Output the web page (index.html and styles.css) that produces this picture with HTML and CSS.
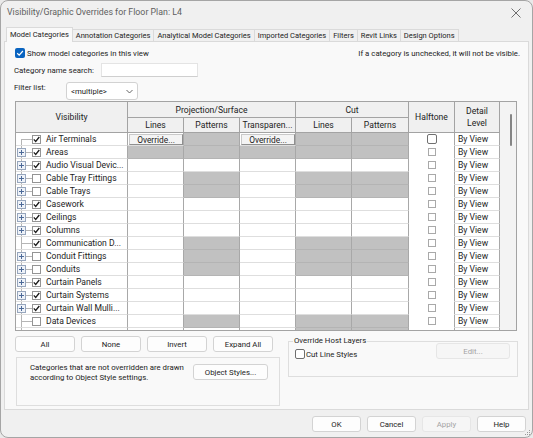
FILE: index.html
```html
<!DOCTYPE html>
<html lang="en">
<head>
  <meta charset="UTF-8" />
  <title>Visibility/Graphic Overrides for Floor Plan: L4</title>
  <link rel="stylesheet" href="styles.css">
</head>
<body>

<div class="window">
  <div class="titlebar">
    <span class="title">Visibility/Graphic Overrides for Floor Plan: L4</span>
    <svg class="close" width="10" height="10" viewBox="0 0 10 10">
      <path d="M0.5 0.5 L9.5 9.5 M9.5 0.5 L0.5 9.5" stroke="#6f6f6f" stroke-width="1" fill="none"/>
    </svg>
  </div>

  <div class="tabs">
    <span class="tab active">Model Categories</span>
    <span class="tab">Annotation Categories</span>
    <span class="tab">Analytical Model Categories</span>
    <span class="tab">Imported Categories</span>
    <span class="tab">Filters</span>
    <span class="tab">Revit Links</span>
    <span class="tab">Design Options</span>
  </div>

  <div class="panel">
    <div class="top-row">
      <label class="show">
        <span class="blue-cb">
          <svg width="10" height="10" viewBox="0 0 10 10"><path d="M2.2 5.2 L4.2 7.1 L7.9 3" stroke="#fff" stroke-width="1.2" fill="none"/></svg>
        </span>
        Show model categories in this view
      </label>
      <span class="hint">If a category is unchecked, it will not be visible.</span>
    </div>

    <div class="field search-row">
      <span class="field-label search-label">Category name search:</span>
      <span class="text-input"></span>
    </div>

    <div class="field filter-row">
      <span class="field-label filter-label">Filter list:</span>
      <span class="select">
        &lt;multiple&gt;
        <svg width="7" height="5" viewBox="0 0 7 5"><path d="M0.5 1 L3.5 4 L6.5 1" stroke="#555" stroke-width="0.9" fill="none"/></svg>
      </span>
    </div>

    <div class="grid">
      <table class="cats">
        <colgroup>
          <col style="width:112px"><col style="width:56px"><col style="width:56px"><col style="width:56px">
          <col style="width:56px"><col style="width:57px"><col style="width:46px"><col style="width:45px">
        </colgroup>
        <thead>
          <tr class="h1">
            <th rowspan="2">Visibility</th>
            <th colspan="3">Projection/Surface</th>
            <th colspan="2">Cut</th>
            <th rowspan="2">Halftone</th>
            <th rowspan="2">Detail<br>Level</th>
          </tr>
          <tr class="h2">
            <th>Lines</th>
            <th>Patterns</th>
            <th>Transparen...</th>
            <th>Lines</th>
            <th>Patterns</th>
          </tr>
        </thead>
        <tbody id="rows"></tbody>
      </table>
      <div class="vscroll"><div class="thumb"></div></div>
    </div>

    <div class="lower">
      <div class="lower-left">
        <div class="btn-row">
          <button class="btn wide">All</button>
          <button class="btn wide">None</button>
          <button class="btn wide">Invert</button>
          <button class="btn wide">Expand All</button>
        </div>
        <div class="note-box">
          <p>Categories that are not overridden are drawn<br>according to Object Style settings.</p>
          <button class="btn styles-btn">Object Styles...</button>
        </div>
      </div>

      <fieldset class="host">
        <legend>Override Host Layers</legend>
        <div class="host-row">
          <label class="cut-lines"><span class="win-cb"></span>Cut Line Styles</label>
          <button class="btn disabled edit-btn">Edit...</button>
        </div>
      </fieldset>
    </div>
  </div>

  <div class="footer">
    <button class="btn foot">OK</button>
    <button class="btn foot">Cancel</button>
    <button class="btn foot disabled">Apply</button>
    <button class="btn foot">Help</button>
  </div>

  <svg class="grip" width="6" height="6" viewBox="0 0 6 6">
    <rect x="4" y="0" width="1" height="1" fill="#999"/>
    <rect x="2" y="2" width="1" height="1" fill="#999"/>
    <rect x="4" y="2" width="1" height="1" fill="#999"/>
    <rect x="0" y="4" width="1" height="1" fill="#999"/>
    <rect x="2" y="4" width="1" height="1" fill="#999"/>
    <rect x="4" y="4" width="1" height="1" fill="#999"/>
  </svg>
</div>

<script>
  const cols = ["L", "P", "T", "CL", "CP"];
  const cutOnly = ["P", "CL", "CP"];

  const rows = [
    { name: "Air Terminals", leaf: true, on: true, grey: cutOnly, edit: true },
    { name: "Areas", on: true, grey: cols },
    { name: "Audio Visual Devic...", on: true, grey: [] },
    { name: "Cable Tray Fittings", on: false, grey: cutOnly },
    { name: "Cable Trays", on: false, grey: cutOnly },
    { name: "Casework", on: true, grey: [] },
    { name: "Ceilings", on: true, grey: [] },
    { name: "Columns", on: true, grey: [] },
    { name: "Communication D...", leaf: true, on: true, grey: cutOnly },
    { name: "Conduit Fittings", on: false, grey: cutOnly },
    { name: "Conduits", on: false, grey: cutOnly },
    { name: "Curtain Panels", on: true, grey: [] },
    { name: "Curtain Systems", on: true, grey: [] },
    { name: "Curtain Wall Mulli...", on: true, grey: [] },
    { name: "Data Devices", leaf: true, on: false, grey: cutOnly },
    { name: "Detail Items", on: true, grey: ["CL", "CP"] }
  ];

  const tick = '<svg width="7" height="7" viewBox="0 0 7 7"><path d="M0.8 3.4 L2.7 5.4 L6.3 1" stroke="#1a1a1a" stroke-width="1.3" fill="none"/></svg>';

  const body = document.getElementById("rows");

  rows.forEach((r, i) => {
    const tr = document.createElement("tr");
    let html = '<td class="vis"><div class="vis-in">';
    html += `<span class="node${i === 0 ? " first" : ""}">${r.leaf ? "" : '<span class="plus"></span>'}</span>`;
    html += `<span class="cb">${r.on ? tick : ""}</span>`;
    html += `<span class="name">${r.name}</span></div></td>`;

    cols.forEach(c => {
      if (r.grey.includes(c)) {
        html += '<td class="grey"></td>';
      } else if (r.edit) {
        html += '<td class="ovr-cell"><div class="ovr">Override...</div></td>';
      } else {
        html += "<td></td>";
      }
    });

    html += `<td class="half"><span class="hcb${r.edit ? " big" : ""}"></span></td>`;
    html += '<td class="detail">By View</td>';
    tr.innerHTML = html;
    body.appendChild(tr);
  });
</script>

</body>
</html>
```

FILE: styles.css
```css
* {
  box-sizing: border-box;
}

body {
  margin: 0;
  background: #e9e9e9;
  font-family: Roboto, "Liberation Sans", sans-serif;
  font-size: 7.8px;
  color: #1c1c1c;
}

.window {
  width: 533px;
  height: 438px;
  border: 1px solid #a5a5a5;
  border-radius: 8px;
  background: #f0f0f0;
  overflow: hidden;
  position: relative;
}

/* title bar */

.titlebar {
  height: 26px;
  padding: 5px 11px 0 6px;
  display: flex;
  justify-content: space-between;
  align-items: flex-start;
}

.title {
  font-size: 8.8px;
  line-height: 13px;
  color: #5e5e5e;
}

.close {
  margin-top: 2px;
}

/* tabs */

.tabs {
  display: flex;
  align-items: flex-end;
  height: 14px;
  margin-left: 5px;
  position: relative;
  z-index: 1;
  font-size: 7.5px;
}

.tab {
  height: 12px;
  line-height: 11px;
  padding: 0 3px;
  border: 1px solid #dadada;
  border-bottom: none;
  border-left: none;
  white-space: nowrap;
}

.tab.active {
  height: 15px;
  margin-bottom: -1px;
  line-height: 13px;
  border-left: 1px solid #dadada;
  background: #f9f9f9;
}

/* main panel */

.panel {
  height: 369px;
  margin: 0 3px;
  padding: 0 9px;
  border: 1px solid #dadada;
  background: #f9f9f9;
}

.top-row {
  height: 12px;
  margin-top: 5px;
  display: flex;
  justify-content: space-between;
  align-items: center;
  white-space: nowrap;
}

.show {
  display: flex;
  align-items: center;
  margin-left: 1px;
  gap: 2px;
}

.blue-cb {
  width: 10px;
  height: 10px;
  border-radius: 2px;
  background: #0a64c0;
  display: flex;
}

.hint {
  margin-right: -1px;
}

.field {
  display: flex;
  align-items: center;
  white-space: nowrap;
}

.search-row {
  height: 14px;
  margin-top: 4px;
}

.search-label {
  width: 87px;
}

.text-input {
  width: 97px;
  height: 14px;
  background: #fff;
  border: 1px solid #e4e4e4;
  border-bottom-color: #cfcfcf;
}

.filter-row {
  height: 18px;
  margin-top: 5px;
  align-items: flex-start;
}

.filter-label {
  width: 52px;
  margin-top: 1px;
}

.select {
  width: 72px;
  height: 18px;
  padding: 0 4px;
  display: flex;
  align-items: center;
  justify-content: space-between;
  background: #fff;
  border: 1px solid #d2d2d2;
  border-radius: 3px;
}

/* categories grid */

.grid {
  width: 502px;
  height: 230px;
  margin: 1px 0 0 1px;
  border: 1px solid #a3a3a3;
  display: flex;
  overflow: hidden;
  background: #fff;
}

.cats {
  width: 484px;
  flex: none;
  table-layout: fixed;
  border-collapse: separate;
  border-spacing: 0;
}

.cats th {
  padding: 0;
  font-weight: normal;
  font-size: 8.6px;
  line-height: 12px;
  color: #222;
  background: #f0f0f0;
  border-right: 1px solid #a3a3a3;
  border-bottom: 1px solid #a3a3a3;
  white-space: nowrap;
  overflow: hidden;
}

.cats .h1 th {
  height: 16px;
}

.cats .h2 th {
  height: 15px;
}

.cats td {
  height: 13px;
  padding: 0;
  font-size: 8.6px;
  line-height: 12px;
  border-right: 1px solid #a8a8a8;
  border-bottom: 1px solid #dedede;
  vertical-align: middle;
  white-space: nowrap;
  overflow: hidden;
}

.vis-in {
  display: flex;
  align-items: center;
  height: 12px;
}

.node {
  width: 16px;
  height: 12px;
  flex: none;
  display: flex;
  align-items: center;
  background:
    linear-gradient(#b5b5b5, #b5b5b5) 5px 0 / 1px 100% no-repeat,
    linear-gradient(#b5b5b5, #b5b5b5) 5px 6px / 11px 1px no-repeat;
}

.node.first {
  background:
    linear-gradient(#b5b5b5, #b5b5b5) 5px 6px / 1px 6px no-repeat,
    linear-gradient(#b5b5b5, #b5b5b5) 5px 6px / 11px 1px no-repeat;
}

.plus {
  width: 9px;
  height: 9px;
  margin-left: 1px;
  border: 1px solid #97a6bd;
  background:
    linear-gradient(#4d6a98, #4d6a98) center / 5px 1px no-repeat,
    linear-gradient(#4d6a98, #4d6a98) center / 1px 5px no-repeat,
    #eef2f8;
}

.cb {
  width: 9px;
  height: 9px;
  flex: none;
  border: 1px solid #949494;
  background: #fff;
  display: flex;
  align-items: center;
  justify-content: center;
}

.name {
  margin-left: 5px;
}

.cats td.grey {
  background: #c1c1c1;
  border-bottom-color: #b4b4b4;
}

.ovr {
  height: 11px;
  margin: 0 0 0 1px;
  line-height: 10px;
  text-align: center;
  font-size: 8.4px;
  background: #f4f4f4;
  border: 1px solid #c9c9c9;
  border-right-color: #8f8f8f;
  border-bottom-color: #8f8f8f;
}

.cats td.half {
  text-align: center;
  border-bottom-color: #fff;
}

.hcb {
  display: inline-block;
  width: 8px;
  height: 8px;
  margin-top: 2px;
  border: 1px solid #a9a9a9;
  background: #fff;
  vertical-align: top;
}

.hcb.big {
  width: 10px;
  height: 10px;
  margin-top: 1px;
  border-color: #707070;
  border-radius: 2px;
}

.cats td.detail {
  padding-left: 3px;
}

.vscroll {
  flex: 1;
  padding: 12px 0 0 10px;
  background: #f3f3f3;
}

.thumb {
  width: 2px;
  height: 32px;
  border-radius: 1px;
  background: #858585;
}

/* lower controls */

.lower {
  display: flex;
  align-items: flex-start;
  margin-top: 5px;
}

.lower-left {
  width: 266px;
}

.btn {
  font-family: inherit;
  font-size: 7.8px;
  color: #1c1c1c;
  padding: 0;
  height: 16px;
  background: #fdfdfd;
  border: 1px solid #d3d3d3;
  border-radius: 3px;
  white-space: nowrap;
}

.btn.disabled {
  color: #a4a4a4;
  background: #f6f6f6;
  border-color: #e6e6e6;
}

.btn-row {
  display: flex;
  gap: 6px;
  margin-left: 1px;
}

.btn.wide {
  width: 60px;
}

.note-box {
  height: 49px;
  margin: 5px 0 0 2px;
  padding: 5px 11px 0 13px;
  border: 1px solid #dedede;
  display: flex;
  align-items: flex-start;
}

.note-box p {
  margin: 0;
  line-height: 10px;
  white-space: nowrap;
}

.styles-btn {
  width: 75px;
  margin: 1px 0 0 auto;
}

.host {
  width: 230px;
  height: 41px;
  margin: 0 0 0 8px;
  padding: 0 7px 0 6px;
  border: 1px solid #dedede;
  min-width: 0;
}

.host legend {
  padding: 0 1px;
  margin-left: -2px;
  line-height: 10px;
}

.host-row {
  display: flex;
  justify-content: space-between;
  align-items: center;
  margin-top: -3px;
}

.cut-lines {
  display: flex;
  align-items: center;
  gap: 1px;
  margin-top: 6px;
}

.win-cb {
  width: 10px;
  height: 10px;
  border: 1px solid #6e6e6e;
  border-radius: 2px;
  background: #fff;
}

.edit-btn {
  width: 74px;
}

/* dialog buttons */

.footer {
  display: flex;
  justify-content: flex-end;
  gap: 6px;
  margin-top: 6px;
  padding-right: 6px;
}

.btn.foot {
  width: 49px;
}

.grip {
  position: absolute;
  right: 1px;
  bottom: 1px;
}
```
